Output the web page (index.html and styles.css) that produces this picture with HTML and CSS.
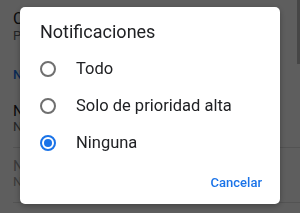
FILE: index.html
```html
<!DOCTYPE html>
<html lang="es">
<head>
    <meta charset="UTF-8">
    <meta name="viewport" content="width=device-width, initial-scale=1.0">
    <title>Notificaciones</title>
    <link rel="stylesheet" href="styles.css">
</head>
<body>

<div class="page">
    <div class="item item-head">
        <div class="item-title">Cuenta</div>
        <div class="item-sub">Perfil</div>
    </div>
    <div class="section-label">Notificaciones</div>
    <div class="item">
        <div class="item-title">Notificaciones</div>
        <div class="item-sub">Ninguna</div>
    </div>
    <div class="item item-off">
        <div class="item-title">Notificaciones por correo</div>
        <div class="item-sub">Ninguna</div>
    </div>
</div>
<div class="scrollbar"></div>

<div class="scrim">
    <div class="dialog">
        <h2>Notificaciones</h2>

        <label class="option">
            <input type="radio" name="notif" value="todo">
            <span class="radio"></span>
            Todo
        </label>
        <label class="option">
            <input type="radio" name="notif" value="alta">
            <span class="radio"></span>
            Solo de prioridad alta
        </label>
        <label class="option">
            <input type="radio" name="notif" value="ninguna" checked>
            <span class="radio"></span>
            Ninguna
        </label>

        <div class="actions">
            <button type="button">Cancelar</button>
        </div>
    </div>
</div>

</body>
</html>
```

FILE: styles.css
```css
body {
    margin: 0;
    width: 300px;
    height: 213px;
    overflow: hidden;
    font-family: Roboto, "Noto Sans", Arial, sans-serif;
    background-color: #ffffff;
}

/* page behind the dialog */
.page {
    padding: 8px 0 0 13px;
}
.item {
    padding: 6px 0 12px 0;
    border-bottom: 1px solid #e0e0e0;
}
.item-head {
    border-bottom: none;
    padding: 2px 0 0 0;
}
.item-title {
    font-size: 15px;
    line-height: 16px;
    color: #202124;
}
.item-head .item-title {
    font-size: 16px;
    line-height: 18px;
}
.item-sub {
    font-size: 13px;
    line-height: 16px;
    color: #5f6368;
}
.section-label {
    margin-top: 23px;
    font-size: 13px;
    line-height: 16px;
    color: #1a73e8;
    font-weight: 500;
    padding-bottom: 14px;
}
.item-off .item-title,
.item-off .item-sub {
    color: #a0a0a0;
}
.item-off {
    padding-top: 10px;
}
.scrollbar {
    position: absolute;
    top: 0;
    right: 0;
    width: 3px;
    height: 64px;
    background-color: #bdbdbd;
    z-index: 1;
}

/* dialog */
.scrim {
    position: fixed;
    top: 0;
    left: 0;
    right: 0;
    bottom: 0;
    background-color: rgba(0, 0, 0, 0.63);
    display: flex;
    justify-content: center;
    align-items: center;
    z-index: 2;
}
.dialog {
    width: 260px;
    background-color: white;
    border-radius: 5px;
    padding: 13px 0 4px 0;
    box-sizing: border-box;
    box-shadow: 0 2px 6px rgba(0, 0, 0, 0.3);
    margin-bottom: 2px;
}
h2 {
    margin: 0 0 6px 0;
    padding-left: 20px;
    font-size: 18px;
    line-height: 24px;
    font-weight: 400;
    color: #202124;
}
.option {
    display: flex;
    align-items: center;
    height: 37px;
    padding-left: 20px;
    font-size: 16.5px;
    color: #202124;
    cursor: pointer;
}
.option input {
    display: none;
}
.radio {
    width: 16px;
    height: 16px;
    border: 2px solid #6f6f6f;
    border-radius: 50%;
    box-sizing: border-box;
    margin-right: 20px;
    display: flex;
    align-items: center;
    justify-content: center;
}
.option input:checked + .radio {
    border-color: #1a73e8;
}
.option input:checked + .radio::after {
    content: "";
    width: 8px;
    height: 8px;
    border-radius: 50%;
    background-color: #1a73e8;
}
.actions {
    display: flex;
    justify-content: flex-end;
    margin-top: 3px;
    padding-right: 10px;
}
button {
    height: 36px;
    padding: 0 8px;
    border: none;
    background: none;
    font-family: Roboto, "Noto Sans", Arial, sans-serif;
    font-size: 13px;
    font-weight: 500;
    color: #1a73e8;
    cursor: pointer;
}
```
